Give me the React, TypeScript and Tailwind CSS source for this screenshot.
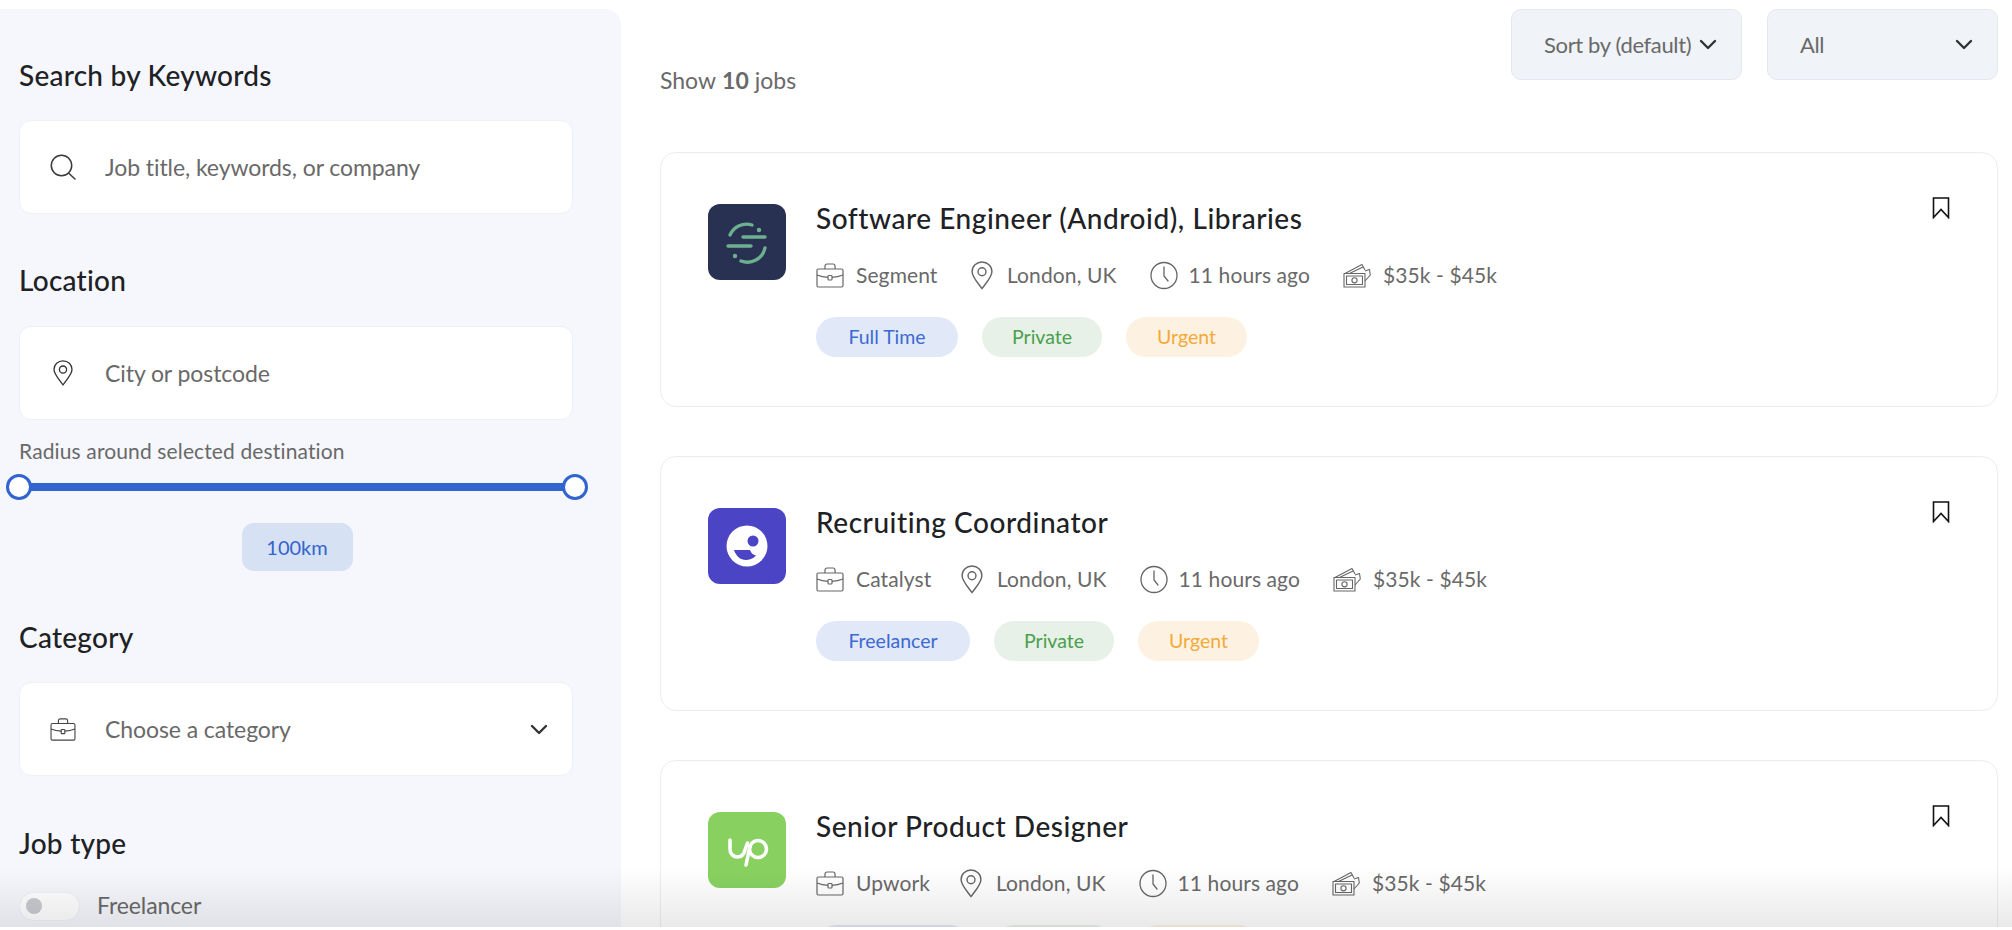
import React from "react";

const ChevronDown = ({ className }: { className: string }) => (
  <svg className={className} viewBox="0 0 18 11" fill="none" stroke="currentColor" strokeWidth="2.4" strokeLinecap="round" strokeLinejoin="round">
    <path d="M2 2l7 7 7-7" />
  </svg>
);

const SearchIcon = () => (
  <svg className="w-[26px] h-[26px] text-[#3a3a3a]" viewBox="0 0 26 26" fill="none" stroke="currentColor" strokeWidth="1.5" strokeLinecap="round">
    <circle cx="11.500" cy="11.500" r="10.200" />
    <path d="M19 19.500l6 5.500" />
  </svg>
);

const PinIcon = ({ className }: { className: string }) => (
  <svg className={className} viewBox="0 0 20 26" fill="none" stroke="currentColor" strokeWidth="1.3" strokeLinejoin="round">
    <path d="M10 25C7 20.500 1 14.500 1 9.600 1 4.600 5 .8 10 .8s9 3.800 9 8.800C19 14.500 13 20.500 10 25z" />
    <circle cx="10" cy="9.600" r="3.600" />
  </svg>
);

const BriefcaseIcon = ({ className }: { className: string }) => (
  <svg className={className} viewBox="0 0 28 25" fill="none" stroke="currentColor" strokeWidth="1.2" strokeLinejoin="round">
    <path d="M9 6V3a2 2 0 0 1 2-2h6a2 2 0 0 1 2 2v3" />
    <rect x="1" y="6" width="26" height="18" rx="1.500" />
    <path d="M1 12c4 1.600 8 2.200 11 2.300M27 12c-4 1.600-8 2.200-11 2.300" />
    <rect x="12" y="12.500" width="4" height="4.500" rx=".8" />
  </svg>
);

const ClockIcon = () => (
  <svg className="w-[28px] h-[29px] text-[#666666]" viewBox="0 0 28 29" fill="none" stroke="currentColor" strokeWidth="1.3" strokeLinecap="round">
    <circle cx="14" cy="14.500" r="13" />
    <path d="M14 6v9l4 5" />
  </svg>
);

const MoneyIcon = () => (
  <svg className="w-[28px] h-[25px] text-[#666666]" viewBox="0 0 28 25" fill="none" stroke="currentColor" strokeWidth="1.1" strokeLinejoin="round">
    <rect x="1" y="10.500" width="21" height="13.500" />
    <rect x="3.500" y="13" width="16" height="8.500" />
    <circle cx="11.500" cy="17.300" r="2.600" />
    <path d="M2 10.500L19 1.500l3 5.500M6.500 10.500L20 4M22 8l4.500-1.500 .8 5.500-5.300 6" />
  </svg>
);

const BookmarkIcon = () => (
  <svg className="w-[18px] h-[22px] text-[#111111]" viewBox="0 0 18 22" fill="none" stroke="currentColor" strokeWidth="1.6" strokeLinejoin="miter">
    <path d="M1.500 1h15v19.500L9 12.500l-7.500 8z" />
  </svg>
);

const SegmentLogo = () => (
  <svg className="w-[78px] h-[76px] shrink-0 rounded-[12px] blur-[0.5px]" viewBox="0 0 78 76">
    <rect width="78" height="76" fill="#293153" />
    <g fill="none" stroke="#6db08f" strokeWidth="3.400" strokeLinecap="round">
      <path d="M44 21A18 18 0 0 0 22 31" />
      <path d="M35 33h22M20 42h23" />
      <path d="M57 44A18 18 0 0 1 33 57" />
    </g>
    <circle cx="51" cy="26" r="2.200" fill="#6db08f" />
    <circle cx="27" cy="52" r="2.200" fill="#6db08f" />
  </svg>
);

const CatalystLogo = () => (
  <svg className="w-[78px] h-[76px] shrink-0 rounded-[12px] blur-[0.5px]" viewBox="0 0 78 76">
    <rect width="78" height="76" fill="#4b44c4" />
    <circle cx="39" cy="38" r="20.500" fill="#ffffff" />
    <circle cx="45" cy="33" r="5.500" fill="#4b44c4" />
    <path d="M26 42h16c1 3 3 5 6 5.500-3 3.500-7 4.500-10 4.500-6 0-10-4-12-10z" fill="#4b44c4" />
  </svg>
);

const UpworkLogo = () => (
  <svg className="w-[78px] h-[76px] shrink-0 rounded-[12px] blur-[0.5px]" viewBox="0 0 78 76">
    <rect width="78" height="76" fill="#88d160" />
    <g fill="none" stroke="#ffffff" strokeWidth="3.600" strokeLinecap="round">
      <path d="M22 28v9c0 5 3.500 8 7.500 8s6.500-3 7.500-7l2.500-7" />
      <circle cx="50" cy="37" r="8.500" />
      <path d="M42 34L38 53" />
    </g>
  </svg>
);

const tagStyles: Record<string, string> = {
  blue: "bg-[#e1e8f7] text-[#3b6ad2]",
  green: "bg-[#e7f1e8] text-[#4aa04c]",
  orange: "bg-[#fdf2e2] text-[#f4a938]",
};

type Tag = { label: string; tone: string; width: string };

const Job = ({ logo, title, company, companyWidth, tags }: { logo: React.ReactNode; title: string; company: string; companyWidth: string; tags: Tag[] }) => (
  <div className="relative h-[255px] shrink-0 rounded-[16px] border border-[#ecedf3] bg-white pl-[47px] pt-[51px] flex gap-[30px]">
    {logo}
    <div className="flex flex-col">
      <div className="h-[32px] pb-[5px] flex items-center text-[28px] font-medium text-[#202124] tracking-[0.55px]">{title}</div>
      <div className="mt-[24px] h-[30px] flex items-center gap-[33px] text-[21px] text-[#696969] tracking-[0.1px]">
        <div className={`flex items-center gap-[12px] ${companyWidth}`}><BriefcaseIcon className="w-[28px] h-[25px] shrink-0 text-[#666666]" /><span className="whitespace-nowrap">{company}</span></div>
        <div className="flex items-center gap-[14px]"><PinIcon className="w-[22px] h-[29px] text-[#666666]" /><span>London, UK</span></div>
        <div className="flex items-center gap-[11px]"><ClockIcon /><span>11 hours ago</span></div>
        <div className="flex items-center gap-[12px]"><MoneyIcon /><span>$35k - $45k</span></div>
      </div>
      <div className="mt-[27px] flex gap-[24px] text-[19.500px]">
        {tags.map((t) => (
          <span key={t.label} className={`h-[40px] rounded-full flex items-center justify-center ${t.width} ${tagStyles[t.tone]}`}>{t.label}</span>
        ))}
      </div>
    </div>
    <div className="absolute right-[47px] top-[44px]"><BookmarkIcon /></div>
  </div>
);

const Heading = ({ children, className }: { children: React.ReactNode; className: string }) => (
  <div className={`h-[34px] pb-[2px] flex items-center text-[28px] font-medium text-[#202124] tracking-[0.25px] ${className}`}>{children}</div>
);

const Field = ({ icon, text, className, chevron }: { icon: React.ReactNode; text: string; className: string; chevron?: boolean }) => (
  <div className={`h-[94px] w-[554px] rounded-[12px] border border-[#eef0f5] bg-white flex items-center text-[23px] text-[#696969] tracking-[-0.08px] ${className}`}>
    <div className="w-[86px] flex justify-center mr-[-1px]">{icon}</div>
    <span className="flex-1">{text}</span>
    {chevron && <ChevronDown className="w-[18px] h-[11px] mr-[24px] text-[#333333]" />}
  </div>
);

const SortSelect = ({ text }: { text: string }) => (
  <div className="h-[71px] w-[231px] pl-[32px] pr-[24px] rounded-[10px] border border-[#e3e7ee] bg-[#f0f3f7] flex items-center justify-between text-[22px] text-[#696969] tracking-[-0.35px]">
    <span>{text}</span>
    <ChevronDown className="w-[18px] h-[11px] text-[#333333]" />
  </div>
);

export default function App() {
  return (
    <div className="relative h-[930px] w-[2012px] overflow-hidden bg-white flex font-['Lato',sans-serif]">
      <aside className="mt-[9px] w-[621px] h-[921px] shrink-0 rounded-tr-[16px] bg-[#f5f7fc] pt-[50px] pl-[19px]">
        <Heading className="">Search by Keywords</Heading>
        <Field className="mt-[27px]" icon={<SearchIcon />} text="Job title, keywords, or company" />
        <Heading className="mt-[50px]">Location</Heading>
        <Field className="mt-[28px]" icon={<PinIcon className="w-[20px] h-[26px] text-[#333333]" />} text="City or postcode" />
        <div className="mt-[19px] h-[24px] flex items-center text-[21px] text-[#696969] tracking-[0.13px]">Radius around selected destination</div>
        <div className="relative mt-[11px] h-[26px] w-[556px] flex items-center">
          <div className="h-[8px] w-full bg-[#3164cf]" />
          <div className="absolute left-[-13px] top-0 h-[26px] w-[26px] rounded-full border-[3.500px] border-[#3164cf] bg-white" />
          <div className="absolute right-[-13px] top-0 h-[26px] w-[26px] rounded-full border-[3.500px] border-[#3164cf] bg-white" />
        </div>
        <div className="mt-[23px] w-[556px] flex justify-center">
          <div className="h-[48px] w-[111px] rounded-[12px] bg-[#d6e1f4] flex items-center justify-center text-[20px] text-[#3565cc]">100km</div>
        </div>
        <Heading className="mt-[50px]">Category</Heading>
        <Field className="mt-[27px]" icon={<BriefcaseIcon className="w-[26px] h-[23px] text-[#444444]" />} text="Choose a category" chevron />
        <Heading className="mt-[51px]">Job type</Heading>
        <div className="mt-[27px] flex items-center gap-[17px]">
          <div className="h-[29px] w-[61px] rounded-full border border-[#eef0f5] bg-white flex items-center pl-[6px]">
            <div className="h-[16px] w-[16px] rounded-full bg-[#c9cad0]" />
          </div>
          <span className="pb-[2px] text-[23px] text-[#696969] tracking-[-0.1px]">Freelancer</span>
        </div>
      </aside>

      <main className="flex-1 pl-[39px] pr-[14px] pt-[9px] flex flex-col">
        <div className="flex justify-between items-start">
          <div className="mt-[59px] h-[24px] flex items-center text-[23px] text-[#696969] gap-[6px]">
            <span>Show</span><span className="font-bold">10</span><span>jobs</span>
          </div>
          <div className="flex gap-[25px]">
            <SortSelect text="Sort by (default)" />
            <SortSelect text="All" />
          </div>
        </div>
        <div className="mt-[60px] flex flex-col gap-[49px]">
          <Job
            logo={<SegmentLogo />}
            title="Software Engineer (Android), Libraries"
            company="Segment"
            companyWidth="w-[122px]"
            tags={[
              { label: "Full Time", tone: "blue", width: "w-[142px]" },
              { label: "Private", tone: "green", width: "w-[120px]" },
              { label: "Urgent", tone: "orange", width: "w-[121px]" },
            ]}
          />
          <Job
            logo={<CatalystLogo />}
            title="Recruiting Coordinator"
            company="Catalyst"
            companyWidth="w-[112px]"
            tags={[
              { label: "Freelancer", tone: "blue", width: "w-[154px]" },
              { label: "Private", tone: "green", width: "w-[120px]" },
              { label: "Urgent", tone: "orange", width: "w-[121px]" },
            ]}
          />
          <Job
            logo={<UpworkLogo />}
            title="Senior Product Designer"
            company="Upwork"
            companyWidth="w-[111px]"
            tags={[
              { label: "Freelancer", tone: "blue", width: "w-[154px]" },
              { label: "Private", tone: "green", width: "w-[120px]" },
              { label: "Urgent", tone: "orange", width: "w-[121px]" },
            ]}
          />
        </div>
      </main>

      <div className="absolute left-0 right-0 bottom-[3px] h-[60px] bg-gradient-to-b from-transparent to-[#00000016]" />
      <div className="absolute left-0 right-0 bottom-0 h-[3px] bg-white" />
    </div>
  );
}
